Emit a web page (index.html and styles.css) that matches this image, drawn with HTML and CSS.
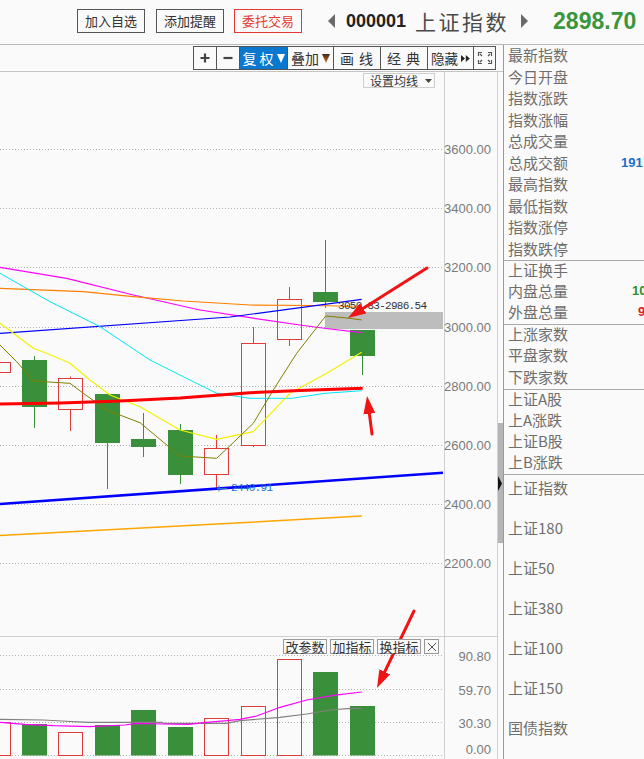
FILE: index.html
```html
<!DOCTYPE html>
<html lang="zh-CN">
<head>
<meta charset="utf-8">
<title>上证指数 000001</title>
<link rel="stylesheet" href="styles.css">
</head>
<body>
<div class="app">
  <header class="topbar">
    <span class="hbtn">加入自选</span>
    <span class="hbtn hbtn-gap">添加提醒</span>
    <span class="hbtn hbtn-gap hbtn-red">委托交易</span>
    <span class="nav nav-left"></span>
    <span class="code">000001</span>
    <span class="name">上证指数</span>
    <span class="nav nav-right"></span>
    <span class="price">2898.70</span>
  </header>

  <div class="main">
    <section class="chart-col">
      <div class="toolbar">
        <div class="tools">
          <span class="tool tool-sq"><svg width="12" height="12" viewBox="0 0 12 12"><path d="M6 1.5v9M1.5 6h9" stroke="#444" stroke-width="2.2"/></svg></span>
          <span class="tool tool-sq2"><svg width="12" height="12" viewBox="0 0 12 12"><path d="M1.5 6h9" stroke="#444" stroke-width="2.2"/></svg></span>
          <span class="tool tool-48 tool-active">复 权<svg class="tri" width="8" height="9" viewBox="0 0 8 9"><path d="M0 0h8L4 9z" fill="#fff"/></svg></span>
          <span class="tool tool-46">叠加<svg class="tri" width="8" height="9" viewBox="0 0 8 9"><defs><linearGradient id="tg" x1="0" y1="0" x2="0" y2="1"><stop offset="0" stop-color="#3b2a1a"/><stop offset="1" stop-color="#d9761c"/></linearGradient></defs><path d="M0 0h8L4 9z" fill="url(#tg)"/></svg></span>
          <span class="tool tool-47">画 线</span>
          <span class="tool tool-47">经 典</span>
          <span class="tool tool-46 tool-sm">隐藏<svg class="tri2" width="9" height="7" viewBox="0 0 9 7"><path d="M0 0l4 3.5L0 7zM4.8 0l4 3.5L4.8 7z" fill="#222"/></svg></span>
          <span class="tool tool-sq"><svg width="16" height="14" viewBox="0 0 16 14" fill="none" stroke="#555" stroke-width="1.2"><path d="M1.5 5V1.5H5M3 3l2 2"/><path d="M11 1.5h3.5V5M13 3l-2 2"/><path d="M1.5 9v3.5H5M3 11l2-2"/><path d="M11 12.5h3.5V9M13 11l-2-2"/></svg></span>
        </div>
      </div>

      <div class="chart">
        <svg class="plot" width="503" height="687" viewBox="0 72 503 687">
          <!-- grid -->
          <g stroke="#b4b4b4" stroke-width="1" stroke-dasharray="1 2">
            <path d="M0 149.5H444M0 208.5H444M0 267.5H444M0 327.5H444M0 386.5H444M0 445.5H444M0 504.5H444M0 563.5H444"/>
            <path d="M0 655.5H444M0 689.5H444M0 722.5H444M0 755.5H444"/>
          </g>
          <!-- frame lines -->
          <g stroke="#d0d0d0" stroke-width="1">
            <path d="M444.5 72V759M497.5 72V759M0 636.5H497"/>
          </g>
          <!-- scrollbar -->
          <rect x="498" y="423" width="5" height="120" fill="#b5b5b5"/>
          <path d="M498 476L502 483.5L498 491z" fill="#111"/>

          <!-- highlight range -->
          <rect x="325" y="312" width="118" height="17" fill="#bdbdbd"/>

          <!-- candles: green -->
          <g stroke="#3a903a" stroke-width="1">
            <path d="M34.5 356V428M107.5 394V489M143.5 413V457M180.5 424V484M325.5 240V308M362.5 356V375"/>
          </g>
          <g fill="#3a903a">
            <rect x="22" y="360" width="25" height="47"/>
            <rect x="95" y="394" width="25" height="49"/>
            <rect x="131" y="439" width="25" height="8"/>
            <rect x="168" y="430" width="25" height="45"/>
            <rect x="313" y="292" width="25" height="10"/>
            <rect x="350" y="330" width="25" height="26"/>
          </g>
          <!-- candles: red hollow -->
          <g stroke="#e23c3c" stroke-width="1" fill="none">
            <rect x="-14.5" y="362.5" width="25" height="10"/>
            <rect x="58.5" y="378.5" width="24" height="31"/>
            <rect x="204.5" y="448.5" width="24" height="26"/>
            <rect x="241.5" y="343.5" width="24" height="102"/>
            <rect x="277.5" y="299.5" width="24" height="40"/>
            <path d="M70.5 376.5V378.5M70.5 409.5V431M216.5 435V448.5M216.5 474.5V488.5M253.5 327V343.5M253.5 445.5V447M289.5 287V299.5M289.5 339.5V346"/>
          </g>

          <!-- moving averages -->
          <g fill="none" stroke-linejoin="round">
            <polyline stroke="#ffa500" stroke-width="1.4" points="0,535.5 250,522.3 361.7,516"/>
            <polyline stroke="#0000ff" stroke-width="2.6" points="0,504 443,472.7"/>
            <polyline stroke="#ff00ff" stroke-width="1.2" points="0,267.3 66.7,278.3 133.3,295 200,310 250,317.7 300,325 330,329 361.7,332.7"/>
            <polyline stroke="#ff7f00" stroke-width="1.2" points="0,288.3 83.3,291.7 133.3,296.7 183.3,301 250,305 313,305.5 340,306 356.7,307.3"/>
            <polyline stroke="#0000ff" stroke-width="1.2" points="0,333.3 230,317 361.7,299.3"/>
            <polyline stroke="#00e5ff" stroke-width="1" points="0,273.3 50,301.7 100,326.7 150,360 183.3,376.7 216.7,393.3 250,398.3 291.7,398.3 325,393.3 361.7,390.7"/>
            <polyline stroke="#f2f200" stroke-width="1.2" points="0,323.3 33.3,348.3 46.7,353.3 70,363.3 90,380 110,395 140,406.7 180,430 216.7,439.3 253.3,431.7 290,393.3 326.7,373.3 361.7,352.3"/>
            <polyline stroke="#808000" stroke-width="1" points="0,345 16.7,361.7 33.3,381 70,383.3 83.3,393.3 106.7,410 140,422.7 180,456 216.7,458.3 230,445.7 253.3,423.3 273.3,390 296.7,353.3 325.7,316 350,318.3 361.7,320"/>
            <polyline stroke="#ff0000" stroke-width="3" points="0,404 60,403 120,401 180,398 250,392.7 300,390.5 362.7,388.3"/>
          </g>

          <!-- price labels on chart -->
          <text class="range-label" x="338" y="309" textLength="89">3050.83-2986.54</text>
          <path d="M217 488.5h10M219 485.5v6" stroke="#1a74c8" stroke-width="1"/>
          <text class="low-label" x="231" y="491" textLength="42">2440.91</text>

          <!-- volume bars -->
          <g fill="#3a903a">
            <rect x="22" y="724" width="25" height="31.5"/>
            <rect x="95" y="725" width="25" height="30.5"/>
            <rect x="131" y="710" width="25" height="45.5"/>
            <rect x="168" y="727" width="25" height="28.5"/>
            <rect x="313" y="672" width="25" height="83.5"/>
            <rect x="350" y="706" width="25" height="49.5"/>
          </g>
          <g stroke="#e23c3c" stroke-width="1" fill="none">
            <rect x="-14.5" y="722.5" width="25" height="33"/>
            <rect x="58.5" y="732.5" width="24" height="23"/>
            <rect x="204.5" y="718.5" width="24" height="37"/>
            <rect x="241.5" y="706.5" width="24" height="49"/>
            <rect x="277.5" y="659.5" width="24" height="96"/>
          </g>
          <g fill="none">
            <polyline stroke="#808080" stroke-width="1.2" points="0,719.3 43.3,720 61.7,721 88.3,722.3 161.7,722.3 163.3,723.3 226.7,723.3 240,720.7 280,717.3 306.7,714 330,710 350,708.3 361.7,708.7"/>
            <polyline stroke="#ff00ff" stroke-width="1.2" points="0,722.3 25,724.3 53.3,725.7 90,726.7 125,725 136.7,723.3 163.3,724 188.3,724.3 206.7,722.3 226.7,720.7 240,719.3 256.7,716 280,707.3 306.7,700 333.3,695.3 361.7,692"/>
          </g>

          <!-- annotation arrows -->
          <defs>
            <marker id="ah" markerUnits="userSpaceOnUse" viewBox="0 0 18 12" refX="6" refY="6" markerWidth="18" markerHeight="12" orient="auto">
              <path d="M0 0L18 6L0 12z" fill="#f01414"/>
            </marker>
          </defs>
          <g stroke="#f01414" stroke-width="3" stroke-linecap="round">
            <line x1="427" y1="268" x2="358.1" y2="311.6" marker-end="url(#ah)"/>
            <line x1="372" y1="434" x2="368.6" y2="407.9" marker-end="url(#ah)"/>
            <line x1="414" y1="611" x2="382.2" y2="677.2" marker-end="url(#ah)"/>
          </g>

          <!-- axis labels -->
          <g class="axis">
            <text x="491" y="154">3600.00</text>
            <text x="491" y="213">3400.00</text>
            <text x="491" y="272">3200.00</text>
            <text x="491" y="332">3000.00</text>
            <text x="491" y="391">2800.00</text>
            <text x="491" y="450">2600.00</text>
            <text x="491" y="509">2400.00</text>
            <text x="491" y="568">2200.00</text>
            <text x="491" y="660.5">90.80</text>
            <text x="491" y="694.5">59.70</text>
            <text x="491" y="727.5">30.30</text>
            <text x="491" y="753.5">0.00</text>
          </g>
        </svg>

        <div class="ma-btn">设置均线<svg width="7" height="4" viewBox="0 0 7 4"><path d="M0 0h7L3.5 4z" fill="#444"/></svg></div>

        <div class="ind-btns">
          <span class="ind">改参数</span>
          <span class="ind">加指标</span>
          <span class="ind">换指标</span>
          <span class="ind ind-x"><svg width="10" height="10" viewBox="0 0 10 10"><path d="M1 1L9 9M9 1L1 9" stroke="#555" stroke-width="1"/></svg></span>
        </div>
      </div>
    </section>

    <aside class="quote">
      <ul class="qgroup g1">
        <li>最新指数</li>
        <li>今日开盘</li>
        <li>指数涨跌</li>
        <li>指数涨幅</li>
        <li>总成交量</li>
        <li><span class="ql">总成交额</span><span class="qv qv-blue">191</span></li>
        <li>最高指数</li>
        <li>最低指数</li>
        <li>指数涨停</li>
        <li>指数跌停</li>
      </ul>
      <ul class="qgroup g2">
        <li>上证换手</li>
        <li><span class="ql">内盘总量</span><span class="qv qv-green">10</span></li>
        <li><span class="ql">外盘总量</span><span class="qv qv-red">9</span></li>
      </ul>
      <ul class="qgroup g3">
        <li>上涨家数</li>
        <li>平盘家数</li>
        <li>下跌家数</li>
      </ul>
      <ul class="qgroup g4">
        <li>上证A股</li>
        <li>上A涨跌</li>
        <li>上证B股</li>
        <li>上B涨跌</li>
      </ul>
      <ul class="qgroup g5">
        <li>上证指数</li>
        <li>上证180</li>
        <li>上证50</li>
        <li>上证380</li>
        <li>上证100</li>
        <li>上证150</li>
        <li>国债指数</li>
      </ul>
    </aside>
  </div>
</div>
</body>
</html>
```

FILE: styles.css
```css
* {
  box-sizing: border-box;
  margin: 0;
  padding: 0;
}

html, body {
  background: #fafafa;
}

body {
  width: 644px;
  height: 759px;
  overflow: hidden;
  font-family: "Noto Sans CJK SC", "Liberation Sans", sans-serif;
  color: #333;
}

.app {
  width: 644px;
  height: 759px;
  display: flex;
  flex-direction: column;
}

/* ---------- top bar ---------- */
.topbar {
  height: 45px;
  flex: none;
  border-bottom: 1px solid #b9b9b9;
  display: flex;
  align-items: center;
  padding-left: 77px;
  padding-bottom: 2px;
}

.hbtn {
  width: 68px;
  height: 24px;
  border: 1px solid #555;
  font-size: 13px;
  line-height: 22px;
  text-align: center;
  color: #333;
  background: #fafafa;
}

.hbtn-gap {
  margin-left: 11px;
}

.hbtn-red {
  margin-left: 10px;
  border-color: #e53935;
  color: #e53935;
}

.nav {
  width: 0;
  height: 0;
  border-top: 7px solid transparent;
  border-bottom: 7px solid transparent;
}

.nav-left {
  margin-left: 26px;
  border-right: 7px solid #6a6a6a;
}

.nav-right {
  margin-left: 12px;
  border-left: 7px solid #6a6a6a;
}

.code {
  margin-left: 11px;
  font-family: "Liberation Sans", sans-serif;
  font-weight: bold;
  font-size: 18px;
  color: #222;
}

.name {
  margin-left: 9px;
  font-size: 21px;
  letter-spacing: 2.5px;
  color: #4a4a4a;
}

.price {
  margin-left: 25px;
  font-family: "Liberation Sans", sans-serif;
  font-weight: bold;
  font-size: 23px;
  color: #3a963a;
}

/* ---------- main ---------- */
.main {
  flex: 1;
  display: flex;
  min-height: 0;
}

.chart-col {
  width: 503px;
  flex: none;
  display: flex;
  flex-direction: column;
}

.toolbar {
  height: 27px;
  flex: none;
  border-bottom: 1px solid #c4c4c4;
  display: flex;
  justify-content: flex-end;
  align-items: flex-start;
  padding-top: 1px;
  padding-right: 7px;
}

.tools {
  display: flex;
  height: 24px;
  border: 1px solid #555;
}

.tool {
  height: 22px;
  display: flex;
  align-items: center;
  justify-content: center;
  border-left: 1px solid #555;
  font-size: 14px;
  line-height: 22px;
  color: #333;
  white-space: nowrap;
}

.tool:first-child {
  border-left: none;
}

.tool-sq { width: 22px; }
.tool-sq2 { width: 23px; }
.tool-48 { width: 48px; }
.tool-46 { width: 46px; }
.tool-47 { width: 47px; letter-spacing: 1px; }
.tool-sm { font-size: 13.5px; }

.tool-active {
  background: #0b78d0;
  color: #fff;
}

.tri {
  margin-left: 3px;
}

.tri2 {
  margin-left: 3px;
}

.chart {
  position: relative;
  flex: 1;
}

.plot {
  display: block;
}

.axis text {
  font-family: "Liberation Sans", sans-serif;
  font-size: 13px;
  fill: #7a7a7a;
  text-anchor: end;
}

.range-label {
  font-family: "Liberation Mono", monospace;
  font-size: 11px;
  fill: #333;
}

.low-label {
  font-family: "Liberation Mono", monospace;
  font-size: 11px;
  fill: #1a74c8;
}

.ma-btn {
  position: absolute;
  top: 1px;
  right: 68px;
  width: 72px;
  height: 15px;
  border: 1px solid #cfcfcf;
  background: #fafafa;
  font-size: 12px;
  line-height: 13px;
  color: #333;
  display: flex;
  align-items: center;
  justify-content: center;
  gap: 7px;
  padding-left: 4px;
}

.ind-btns {
  position: absolute;
  top: 567px;
  right: 64px;
  display: flex;
  gap: 3px;
}

.ind {
  height: 15px;
  width: 44px;
  border: 1px solid #999;
  background: #fafafa;
  font-size: 13px;
  line-height: 13px;
  text-align: center;
  color: #333;
}

.ind-x {
  width: 15px;
  display: flex;
  align-items: center;
  justify-content: center;
}

/* ---------- quote panel ---------- */
.quote {
  flex: 1;
  border-left: 1px solid #9a9a9a;
  overflow: hidden;
}

.qgroup {
  list-style: none;
  border-bottom: 1px solid #aaa;
  padding-left: 4px;
}

.qgroup li {
  display: flex;
  align-items: flex-start;
  white-space: nowrap;
  font-size: 15px;
  color: #6e6e6e;
}

.g1 li { height: 21.5px; line-height: 19px; }
.g2 li { height: 21px; line-height: 18px; }
.g3 li { height: 21.33px; line-height: 18.5px; }
.g4 li { height: 21px; line-height: 18px; }

.g5 {
  border-bottom: none;
}

.g5 li {
  height: 40px;
  line-height: 26px;
}

.ql {
  width: 113px;
  flex: none;
}

.qv {
  font-family: "Liberation Sans", sans-serif;
  font-weight: bold;
  font-size: 13px;
}

.qv-blue { color: #1a70c8; }
.qv-green { color: #2f8f2f; margin-left: 11px; }
.qv-red { color: #e02020; margin-left: 17px; }
```
